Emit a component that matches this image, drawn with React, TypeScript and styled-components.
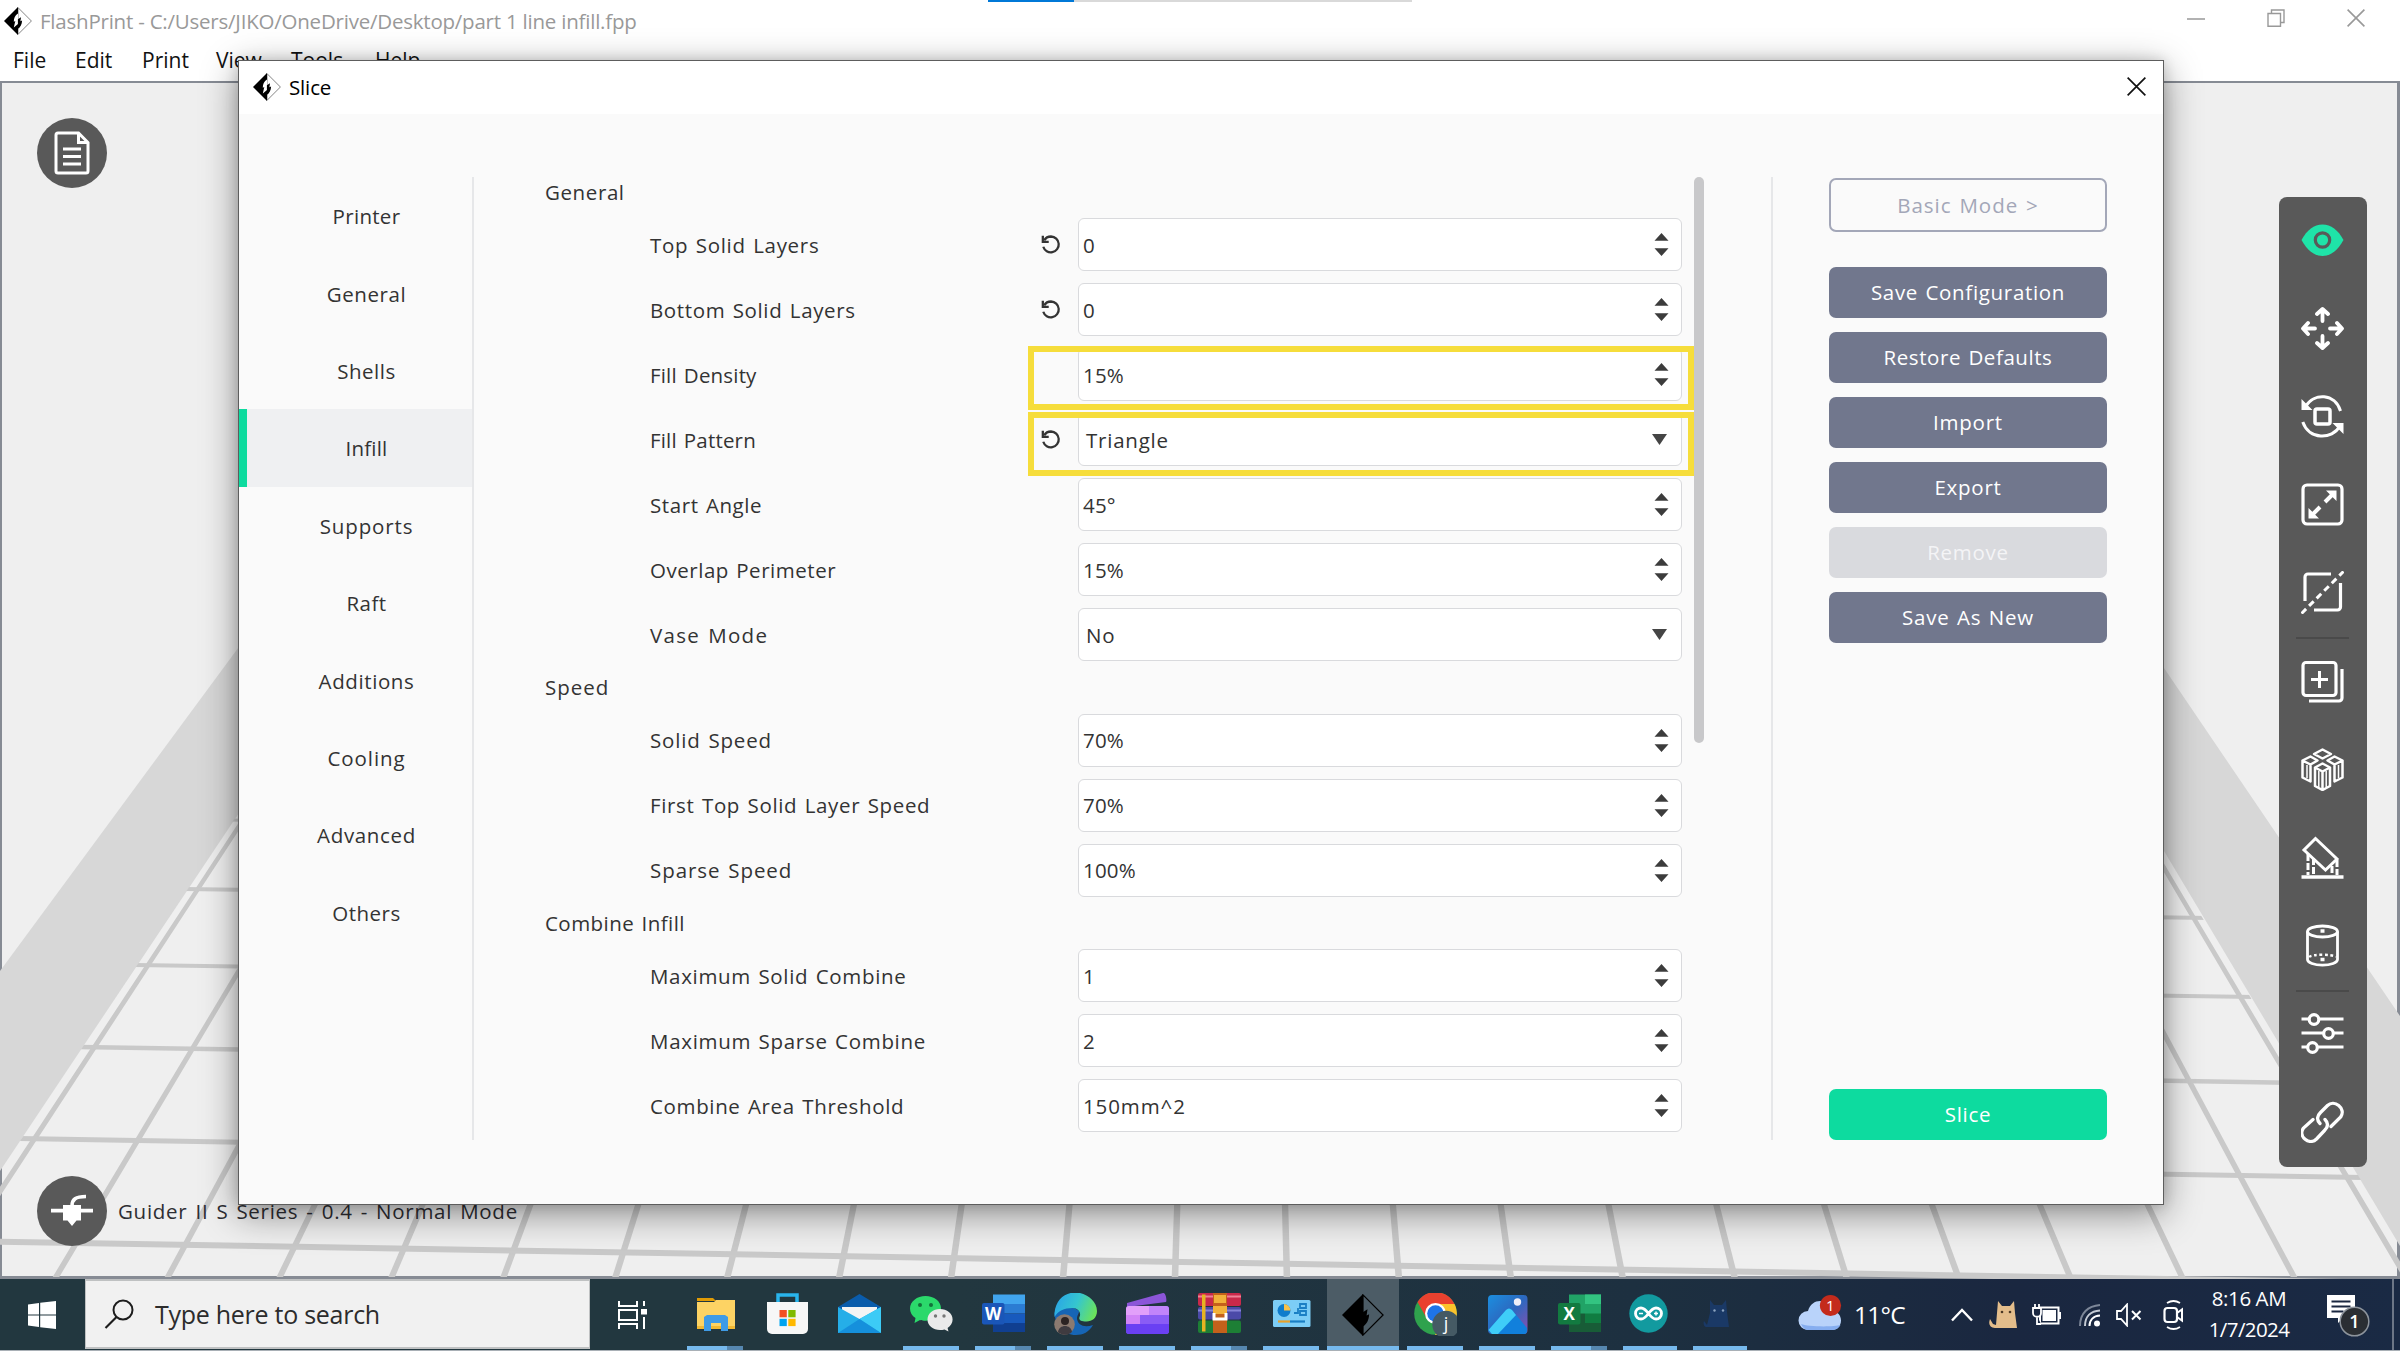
import React from "react";
import styled, { createGlobalStyle, css } from "styled-components";

const GlobalStyle = createGlobalStyle`
  * { box-sizing: border-box; }
  html, body { margin: 0; padding: 0; }
  body { width: 2400px; height: 1351px; overflow: hidden; background: #fff; font-family: "Open Sans", "Noto Sans", sans-serif; }
  button { font: inherit; }
  svg { display: block; flex: none; }
`;

/* ---------- main window ---------- */

const Desktop = styled.div`
  position: relative;
  width: 2400px;
  height: 1351px;
  display: flex;
  flex-direction: column;
  overflow: hidden;
  background: #fff;
`;

const TitleBar = styled.header`
  height: 42px;
  display: flex;
  align-items: center;
  padding: 0 35px 0 4px;
  gap: 8px;
  flex: none;
`;

const WindowTitle = styled.span`
  font-size: 20.5px;
  line-height: 28px;
  color: #999;
  letter-spacing: -0.22px;
  white-space: pre;
  flex: 1;
`;

const WindowControls = styled.div`
  display: flex;
  align-items: center;
  gap: 62px;
  padding-bottom: 7px;
`;

const TabHint = styled.div`
  position: absolute;
  top: 0;
  left: 988px;
  width: 424px;
  height: 2px;
  display: flex;
  background: #d9d9d9;
  &::before { content: ""; width: 86px; background: #0078d7; }
`;

const MenuBar = styled.nav`
  height: 39px;
  flex: none;
  display: flex;
  padding-left: 13px;
`;

const MenuItem = styled.span<{ $w: number }>`
  width: ${(p) => p.$w}px;
  font-size: 21px;
  line-height: 37px;
  letter-spacing: 0;
  color: #111;
`;

const Viewport = styled.main`
  position: relative;
  flex: 1;
  border: 2px solid #868b94;
  border-width: 2px 3px 3px 2px;
  background: #efefef;
  display: flex;
  flex-direction: column;
  justify-content: space-between;
  align-items: flex-start;
  padding: 35px 0 30px 35px;
`;

const Scene = styled.svg`
  position: absolute;
  left: -2px;
  top: -2px;
`;

const RoundButton = styled.button`
  position: relative;
  width: 70px;
  height: 70px;
  border: 0;
  border-radius: 50%;
  background: #595959;
  display: grid;
  place-items: center;
  padding: 0;
`;

const StatusRow = styled.div`
  position: relative;
  display: flex;
  align-items: center;
  gap: 11px;
`;

const StatusText = styled.span`
  font-size: 20.5px;
  line-height: 28px;
  letter-spacing: 0.72px;
  word-spacing: 2px;
  color: #2e2e33;
  white-space: pre;
`;

const Toolbar = styled.aside`
  position: absolute;
  z-index: 1;
  left: 2277px;
  top: 114px;
  width: 88px;
  height: 970px;
  border-radius: 8px;
  background: #595959;
  display: flex;
  flex-direction: column;
`;

const ToolSlot = styled.div<{ $line?: boolean }>`
  flex: 1;
  display: grid;
  place-items: center;
  padding: 0 2px 2px 0;
  position: relative;
  ${(p) =>
    p.$line &&
    css`
      &::after {
        content: "";
        position: absolute;
        left: 17px;
        right: 18px;
        bottom: -1px;
        height: 2px;
        background: #4a4a4a;
      }
    `}
`;

/* ---------- slice dialog ---------- */

const Dialog = styled.section`
  position: absolute;
  left: 238px;
  top: 60px;
  width: 1926px;
  height: 1145px;
  border: 1.5px solid #5d5d5d;
  background: #fafafa;
  box-shadow: 0 9px 34px rgba(0, 0, 0, 0.42), 0 0 12px rgba(0, 0, 0, 0.14);
  display: flex;
  flex-direction: column;
`;

const DialogHeader = styled.header`
  height: 53px;
  flex: none;
  display: flex;
  align-items: center;
  background: #fff;
  padding: 0 17px 2px 14px;
  gap: 8px;
`;

const DialogTitle = styled.h1`
  margin: 0;
  flex: 1;
  font-weight: 400;
  font-size: 20.5px;
  line-height: 28px;
  letter-spacing: -0.15px;
  color: #000;
`;

const DialogBody = styled.div`
  display: grid;
  grid-template-columns: 235px 1299px 1fr;
  height: 963px;
  margin-top: 63px;
  font-size: 20.5px;
  word-spacing: 1.5px;
`;

const SideNav = styled.nav`
  border-right: 2px solid #e6e7e9;
  display: flex;
  flex-direction: column;
`;

const NavItem = styled.a<{ $on?: boolean; $track: number }>`
  height: 77.4px;
  border-left: 8px solid ${(p) => (p.$on ? "#0ddb9f" : "transparent")};
  background: ${(p) => (p.$on ? "#eff0f2" : "transparent")};
  padding: 1px 0 0 14px;
  display: flex;
  align-items: center;
  justify-content: center;
  letter-spacing: ${(p) => p.$track}px;
  color: #333;
`;

const Settings = styled.div`
  display: flex;
  justify-content: space-between;
  padding-left: 71px;
  border-right: 2px solid #e6e7e9;
`;

const Form = styled.div`
  width: 1149px;
  overflow: hidden;
`;

const Group = styled.section`
  display: flex;
  flex-direction: column;
  gap: 12px;
`;

const GroupTitle = styled.h2<{ $first?: boolean; $track: number }>`
  margin: 0 0 -12px;
  height: ${(p) => (p.$first ? 41.3 : 52.5)}px;
  line-height: ${(p) => (p.$first ? 30 : 53)}px;
  font-weight: 400;
  font-size: 20.5px;
  letter-spacing: ${(p) => p.$track}px;
  color: #333;
`;

const Row = styled.div`
  position: relative;
  height: 53px;
  display: grid;
  grid-template-columns: 391px 37px 604px;
  align-items: center;
  padding-left: 105px;
`;

const RowLabel = styled.label<{ $track: number }>`
  line-height: 28px;
  letter-spacing: ${(p) => p.$track}px;
  color: #333;
`;

const Field = styled.div<{ $select?: boolean; $track: number }>`
  height: 53px;
  border: 1.5px solid #d9dadd;
  border-radius: 6px;
  background: #fff;
  display: flex;
  align-items: center;
  justify-content: space-between;
  padding: 0 ${(p) => (p.$select ? "14px 0 7px" : "12px 0 4px")};
  color: #333;
  letter-spacing: ${(p) => p.$track}px;
`;

const Highlight = styled.div<{ $dy: number }>`
  position: absolute;
  left: 483px;
  top: ${(p) => p.$dy}px;
  width: 666px;
  height: 64px;
  border: 6px solid #f6dd3b;
`;

const Scrollbar = styled.div`
  width: 10px;
  height: 566px;
  border-radius: 5px;
  background: #c8c8ca;
  margin-right: 67px;
`;

const Actions = styled.div`
  display: flex;
  flex-direction: column;
  gap: 14px;
  padding: 1px 56px 0 56px;
`;

const ActionButton = styled.button<{ $kind?: "outline" | "disabled" | "primary"; $track?: number }>`
  height: 51px;
  border: 0;
  border-radius: 7px;
  padding: 0 0 1px;
  letter-spacing: ${(p) => p.$track ?? 0.75}px;
  word-spacing: 1.5px;
  color: #fff;
  background: #71778d;
  ${(p) =>
    p.$kind === "outline" &&
    css`
      height: 54px;
      margin-bottom: 21px;
      border: 2px solid #a3a7b8;
      background: #fafafa;
      color: #a3a7b8;
    `}
  ${(p) => p.$kind === "disabled" && css`background: #d9dade; color: #f4f4f6;`}
  ${(p) => p.$kind === "primary" && css`background: #0ddb9f; margin-top: auto;`}
`;

/* ---------- taskbar ---------- */

const Taskbar = styled.footer`
  position: relative;
  height: 72px;
  flex: none;
  display: flex;
  background: linear-gradient(90deg, #22373f 0%, #22373f 40%, #1d3040 68%, #1a2740 84%, #1a2a44 100%);
  border-bottom: 1px solid #a9b0b6;
`;

const StartButton = styled.div`
  width: 85px;
  padding-right: 2px;
  display: grid;
  place-items: center;
`;

const SearchBox = styled.div`
  width: 505px;
  height: 70px;
  border: 2px solid #bfc1c2;
  border-width: 2px 1px;
  background: #f1f1f1;
  display: flex;
  align-items: center;
  padding-left: 18px;
  gap: 21px;
  font-size: 25px;
  letter-spacing: -0.27px;
  color: #2c2c2c;
`;

const TaskView = styled.div`
  width: 89px;
  padding-left: 28px;
  display: flex;
  align-items: center;
`;

const Apps = styled.div`
  display: flex;
`;

const AppSlot = styled.div<{ $active?: boolean }>`
  position: relative;
  width: 72px;
  height: 71px;
  display: grid;
  place-items: center;
  background: ${(p) => (p.$active ? "#4c5c66" : "transparent")};
  &:nth-last-child(-n + 2) { width: 70px; }
`;

const RunLine = styled.i<{ $more?: boolean; $wide?: boolean }>`
  position: absolute;
  bottom: 0;
  left: ${(p) => (p.$wide ? 0 : 8)}px;
  right: ${(p) => (p.$wide ? 0 : 8)}px;
  height: 4px;
  background: ${(p) => (p.$more ? "linear-gradient(90deg, #76b9ed 72%, #5687b0 72%)" : "#76b9ed")};
`;

const Tray = styled.div`
  flex: 1;
  display: flex;
  align-items: center;
  color: #fff;
`;

const TrayItem = styled.div<{ $w: number }>`
  width: ${(p) => p.$w}px;
  display: flex;
  align-items: center;
`;

const Temperature = styled.span`
  font-size: 24.5px;
  letter-spacing: -0.75px;
`;

const Clock = styled.div`
  width: 116px;
  padding-bottom: 2px;
  display: flex;
  flex-direction: column;
  font-size: 20.5px;
  line-height: 31px;
`;

const ClockLine = styled.span<{ $track: number }>`
  width: 78px;
  display: flex;
  justify-content: center;
  white-space: pre;
  letter-spacing: ${(p) => p.$track}px;
`;

const ShowDesktop = styled.div`
  margin-left: auto;
  width: 8px;
  height: 71px;
  border-left: 2px solid #6d7787;
`;

/* ---------- drawings ---------- */

const Logo = ({ size, solid }: { size: number; solid?: boolean }) => (
  <svg width={size} height={size} viewBox="0 0 28 28">
    <path d="M14 0.6 27.4 14 14 27.4z" fill={solid ? "none" : "#fff"} stroke={solid ? "#000" : "#666"} strokeWidth="0.8" />
    <path d="M14 0v28L0 14z" fill="#000" />
    <path d="M14 6.500C11 8.500 9.800 11 9.800 14.800l1.500-.9-1.500 6.600L14 17z" fill={solid ? "#4c5c66" : "#fff"} opacity={solid ? 0 : 1} />
    <path d="M13.900 12.200l3.100-2-.6 4.100 1.700-.8c-.2 4.200-1.700 6.700-4.200 8.200z" fill="#000" />
  </svg>
);

const Cross = ({ color, size = 18 }: { color: string; size?: number }) => (
  <svg width={size} height={size} viewBox="0 0 18 18" stroke={color} strokeWidth="1.6" fill="none">
    <path d="M.6.6l16.800 16.800M17.400.6.6 17.400" />
  </svg>
);

const ResetIcon = () => (
  <svg width="20" height="21" viewBox="0 0 22 22" fill="none" stroke="#333" strokeWidth="2.500">
    <path d="M3.500 6.500C5.200 3.500 8 2.200 11 2.200a8.700 8.700 0 1 1-8.500 11.300" />
    <path d="M2 1.500v6.700h6.500" />
  </svg>
);

const Stepper = () => (
  <svg width="15" height="23" viewBox="0 0 15 23" fill="#3c3c3c">
    <path d="M7.500 0 14.500 7.800H.5zM7.500 23 .5 15.200h14z" />
  </svg>
);

const Arrow = () => (
  <svg width="15" height="11" viewBox="0 0 15 11" fill="#454545">
    <path d="M0 0h15L7.500 11z" />
  </svg>
);

const VX = 1237;
const VY = -700;
const FLOOR_Y = 1277;
const floorColumns = Array.from({ length: 23 }, (_, i) => {
  const x = 1175 + (i - 11) * 111.9;
  const t = 0.3;
  const topX = x + (VX - x) * t;
  const topY = FLOOR_Y + (VY - FLOOR_Y) * t;
  const half = 3.3;
  return `M${x - half} ${FLOOR_Y}L${topX - half * (1 - t)} ${topY}H${topX + half * (1 - t)}L${x + half} ${FLOOR_Y}z`;
});
const floorRows: [number, number, number, number, number][] = [
  [229, 820, 2164, 848, 3],
  [184, 889, 2209, 918, 4],
  [135, 965, 2255, 997, 4],
  [79, 1047, 2303, 1083, 4.5],
  [19, 1138.500, 2363, 1177.500, 5],
  [-10, 1241.500, 2400, 1283, 6],
];

const PrintBed = () => (
  <Scene width="2400" height="1198" viewBox="0 81 2400 1198">
    <defs>
      <clipPath id="bed">
        <path d="M0 1171 245 803H2133L2400 1244.500V1279H0z" />
      </clipPath>
    </defs>
    <path d="M0 971 325 530V684L0 1171z" fill="#d7d7d7" />
    <path d="M2100 600 2164 668 2400 1016V1246L2164 851 2100 750z" fill="#d7d7d7" />
    <g clipPath="url(#bed)">
      <path d={floorColumns.join("")} fill="#c9c9c9" />
      {floorRows.map(([x1, y1, x2, y2, w]) => (
        <line key={y1} x1={x1} y1={y1} x2={x2} y2={y2} stroke="#c9c9c9" strokeWidth={w} />
      ))}
    </g>
  </Scene>
);

const DocIcon = () => (
  <svg width="36" height="44" viewBox="0 0 36 44" fill="none" stroke="#fff" strokeWidth="3">
    <path d="M4 2h20.500L34 11.500V40a2 2 0 0 1-2 2H4a2 2 0 0 1-2-2V4a2 2 0 0 1 2-2z" />
    <path d="M24.500 2v9.500H34" />
    <path d="M9 18h18M9 25.500h18M9 33h18" strokeWidth="3.200" />
  </svg>
);

const NozzleIcon = () => (
  <svg width="44" height="34" viewBox="0 0 44 34" fill="#fff">
    <path d="M13 11h18v15.500h-4.500L22 32l-4.500-5.500H13z" />
    <path d="M1 14.700h42v3.700H1z" />
    <path d="M22 12c0-6.500 3.500-9.500 14-9.500" fill="none" stroke="#fff" strokeWidth="3.600" />
  </svg>
);

const toolIcons: { line?: boolean; art: React.ReactNode }[] = [
  {
    art: (
      <>
        <path d="M.5 21C6 11 13 5.500 21.500 5.500S37 11 42.500 21C37 31 30 37 21.500 37S6 31 .5 21z" fill="#1fe3a8" stroke="none" />
        <circle cx="21.500" cy="21" r="7.200" stroke="#595959" strokeWidth="3.200" fill="#1fe3a8" />
      </>
    ),
  },
  {
    art: (
      <g strokeWidth="3.800" strokeLinecap="round" strokeLinejoin="round">
        <path d="M21.500 14V2.500M16 7l5.500-5 5.500 5M21.500 29v11.500M16 36l5.500 5 5.500-5M14 21.500H2.500M7 16l-5 5.500 5 5.500M29 21.500h11.500M36 16l5 5.500-5 5.500" />
      </g>
    ),
  },
  {
    art: (
      <>
        <rect x="14" y="14" width="15" height="15" rx="2" strokeWidth="3.500" />
        <path d="M4.500 11.500C13-2.500 34-2 39.500 16M1.800 27C8 45 31 45 39 31" strokeWidth="3" />
        <path d="M.5 4v11h11zM42.500 39V28h-11z" fill="#fff" stroke="none" />
      </>
    ),
  },
  {
    art: (
      <>
        <rect x="2" y="2" width="39" height="39" rx="4" strokeWidth="3.200" />
        <path d="M24 19l9-9M19 24l-9 9" strokeWidth="4" />
        <path d="M25 7.500h10.500V18zM7.500 25v10.500H18z" fill="#fff" stroke="none" />
      </>
    ),
  },
  {
    line: true,
    art: (
      <>
        <path d="M4 30V6a3 3 0 0 1 3-3h23M39.500 12v24a3 3 0 0 1-3 3H13" strokeWidth="3.200" />
        <path d="M.5 42.500l42-42" strokeWidth="3" strokeDasharray="6.500 4.200" />
      </>
    ),
  },
  {
    art: (
      <>
        <rect x="2" y="2.500" width="33" height="33" rx="3" strokeWidth="3.200" />
        <path d="M18.500 11v17M10 19.500h17" strokeWidth="3" />
        <path d="M41 9v29a3 3 0 0 1-3 3H8" strokeWidth="3.200" />
      </>
    ),
  },
  {
    art: (
      <g strokeWidth="2.500" strokeLinejoin="round">
        <path d="M21.500 1.500 30 6l-8.500 4.500L13 6z" />
        <path d="M9.500 8.500l7 4-7 4-8-4zM1.500 12.500v17l8 4v-17M9.500 33.500v-17" />
        <path d="M33.500 8.500l-7 4 7 4 8-4zM41.500 12.500v17l-8 4v-17" />
        <path d="M21.500 15.500l7.500 4-7.500 4-7.500-4zM14 19.500V38l7.500 4 7.500-4V19.500M21.500 23.500V42" fill="#595959" />
        <path d="M6 17v13M37.500 17v13M17.800 23v16M25.200 23v16" strokeWidth="1.500" />
      </g>
    ),
  },
  {
    art: (
      <>
        <path d="M14.500 2.500 3 14l21.500 20L36 23z" strokeWidth="3" />
        <path d="M7 18v21M12.500 22v17M31 30v9M36 24v15" strokeWidth="3" strokeDasharray="7 2" />
        <path d="M.5 41h42" strokeWidth="3.400" />
      </>
    ),
  },
  {
    art: (
      <>
        <ellipse cx="21.500" cy="7.500" rx="15" ry="5.500" strokeWidth="2.800" />
        <path d="M6.500 7.500v28c0 3 6.700 5.700 15 5.700s15-2.700 15-5.700v-28" strokeWidth="2.800" />
        <path d="M8 33c3-3 24-3 27 0" strokeWidth="2.400" strokeDasharray="2.800 2.600" />
        <path d="M19.500 7h4M19.500 35.500h4" strokeWidth="3.500" />
      </>
    ),
  },
  {
    art: (
      <g strokeWidth="3.200">
        <path d="M.5 7H8M18 7h24.500M.5 21H22M33 21h9.500M.5 35H6M17 35h25.500" />
        <circle cx="13" cy="7.500" r="4.800" />
        <circle cx="27.500" cy="21.500" r="4.800" />
        <circle cx="11.500" cy="35.500" r="4.800" />
      </g>
    ),
  },
  {
    art: (
      <g strokeWidth="3.300" strokeLinecap="round" transform="translate(0 1)">
        <path d="M19 22.500c-4-4-2.500-8 .5-11l7-7c6.500-6.500 19 2.500 13.200 11.500L30 25.500" />
        <path d="M24 18.500c4 4 2.500 8-.5 11l-8 8.500C8.500 45-3.500 35.500 2.500 27L12 18.500" />
      </g>
    ),
  },
];

interface Setting {
  label: string;
  value: string;
  select?: boolean;
  reset?: boolean;
  mark?: number;
  track?: number;
  valueTrack?: number;
}

const groups: { title: string; track: number; rows: Setting[] }[] = [
  {
    title: "General",
    track: 0.6,
    rows: [
      { label: "Top Solid Layers", value: "0", reset: true, track: 0.69 },
      { label: "Bottom Solid Layers", value: "0", reset: true, track: 0.63 },
      { label: "Fill Density", value: "15%", mark: -2, track: 0.18 },
      { label: "Fill Pattern", value: "Triangle", select: true, reset: true, mark: -1, track: 0.18 },
      { label: "Start Angle", value: "45°", track: 0.58 },
      { label: "Overlap Perimeter", value: "15%", track: 0.53 },
      { label: "Vase Mode", value: "No", select: true, track: 1.3 },
    ],
  },
  {
    title: "Speed",
    track: 1,
    rows: [
      { label: "Solid Speed", value: "70%", track: 0.85 },
      { label: "First Top Solid Layer Speed", value: "70%", track: 0.65 },
      { label: "Sparse Speed", value: "100%", track: 0.94 },
    ],
  },
  {
    title: "Combine Infill",
    track: 0.46,
    rows: [
      { label: "Maximum Solid Combine", value: "1", track: 0.67 },
      { label: "Maximum Sparse Combine", value: "2", track: 0.69 },
      { label: "Combine Area Threshold", value: "150mm^2", track: 0.64, valueTrack: 0.9 },
    ],
  },
];

const navItems: [string, number][] = [
  ["Printer", 0.3],
  ["General", 0.6],
  ["Shells", 0.5],
  ["Infill", 0.2],
  ["Supports", 0.87],
  ["Raft", 0.5],
  ["Additions", 0.6],
  ["Cooling", 0.9],
  ["Advanced", 0.65],
  ["Others", 0.5],
];

const glyph = (x: number, y: number, size: number, text: string, weight = 700, fill = "#fff") => (
  <text x={x} y={y} fontSize={size} fontWeight={weight} fill={fill} textAnchor="middle" fontFamily="Open Sans, sans-serif">
    {text}
  </text>
);

interface AppEntry {
  name: string;
  line?: "one" | "more" | "wide";
  art: React.ReactNode;
}

const apps: AppEntry[] = [
  {
    name: "explorer",
    line: "more",
    art: (
      <>
        <path d="M3 5h16l3 3H3z" fill="#e09b05" />
        <path d="M3 9h17l2-2h19v29H3z" fill="#fdd364" />
        <path d="M3 33h38v3H3z" fill="#f2b933" />
        <path d="M10 38V24l3-2h18l3 2v14h-7v-8h-10v8z" fill="#3f9be6" />
      </>
    ),
  },
  {
    name: "store",
    art: (
      <>
        <path d="M12 10V2h19v8" fill="none" stroke="#29b4ec" strokeWidth="3.500" />
        <path d="M1 9h41v27a5 5 0 0 1-5 5H6a5 5 0 0 1-5-5z" fill="#f7f7f7" />
        <path d="M13.500 17h7.300v7.300h-7.300z" fill="#f25022" />
        <path d="M22.300 17h7.300v7.300h-7.300z" fill="#7fba00" />
        <path d="M13.500 25.800h7.300v7.300h-7.300z" fill="#00a4ef" />
        <path d="M22.300 25.800h7.300v7.300h-7.300z" fill="#ffb900" />
      </>
    ),
  },
  {
    name: "mail",
    art: (
      <>
        <path d="M0 14 21.500 1 43 14v4H0z" fill="#0a5cab" />
        <path d="M4 14h35v12H4z" fill="#f4f4f4" />
        <path d="M0 14v26h43V14L21.500 26z" fill="#25aee8" />
        <path d="M43 14 21.500 26 43 40z" fill="#3ccbf6" />
        <path d="M0 40 21.500 26 43 40z" fill="#1590dc" />
      </>
    ),
  },
  {
    name: "wechat",
    line: "one",
    art: (
      <>
        <path d="M15.500 3C7 3 0 8.500 0 15.500c0 4 2 7.300 5.500 9.500L4.500 30l5.500-3c2 .6 3.500.8 5.500.8 8.500 0 15.500-5.500 15.500-12.500S24 3 15.500 3z" fill="#2bd96b" />
        <path d="M30 16c-7 0-12.500 4.500-12.500 10.500S23 37 30 37c1.600 0 3-.2 4.500-.6l4 2.200-.9-3.700c3-2 5-5 5-8.400C42.600 20.500 37 16 30 16z" fill="#eaeaea" />
        <g fill="#14713a"><circle cx="10" cy="12" r="2" /><circle cx="21" cy="12" r="2" /></g>
        <g fill="#777"><circle cx="25.500" cy="23" r="1.700" /><circle cx="34" cy="23" r="1.700" /></g>
      </>
    ),
  },
  {
    name: "word",
    line: "more",
    art: (
      <>
        <path d="M11 1.500h32V11H11z" fill="#41a5ee" />
        <path d="M11 11h32v9.500H11z" fill="#2b7cd3" />
        <path d="M11 20.500h32V30H11z" fill="#185abd" />
        <path d="M11 30h32v9H11z" fill="#103f91" />
        <rect y="10" width="22.500" height="21.500" rx="2" fill="#1a56b8" />
        {glyph(11.200, 27, 17, "W")}
      </>
    ),
  },
  {
    name: "edge",
    line: "one",
    art: (
      <>
        <defs>
          <linearGradient id="edgeTop" x1="0" y1=".3" x2="1" y2=".6">
            <stop offset="0" stopColor="#2aa5e6" />
            <stop offset=".5" stopColor="#35c6cf" />
            <stop offset="1" stopColor="#6be35a" />
          </linearGradient>
        </defs>
        <path d="M.5 20C1 32 9 42 22 42c7 0 13-3 17-10-9 3-15 0-16-6 0-4 2-5 2-8-6-6-22-4-24.500 2z" fill="#1665b5" />
        <path d="M.5 20C2 6 11-.5 21.500-.5S43 8 43 18c0 7-5 10.500-10.500 10.500-6 0-8-2-7-4.500 2-4-1-9-7-9C10 15 4 18 .5 24z" fill="url(#edgeTop)" />
        <circle cx="10.500" cy="31.500" r="10.300" fill="#8b7a70" />
        <circle cx="11" cy="28" r="4" fill="#2c2322" />
        <path d="M4 39c1-8 13-8 14 0-4 3.500-10 3.500-14 0z" fill="#3f3b40" />
      </>
    ),
  },
  {
    name: "clipchamp",
    line: "one",
    art: (
      <>
        <path d="M1 10 37 0c3-.6 4 8 3 9L1 14z" fill="#8b55d8" />
        <rect y="13" width="43" height="28" rx="3" fill="#8a5cf5" />
        <path d="M3 13h20v9H0v-6a3 3 0 0 1 3-3z" fill="#e2a0fa" />
        <path d="M23 13h17a3 3 0 0 1 3 3v6H23z" fill="#c184fa" />
        <path d="M0 22h14v9H0z" fill="#d184f7" />
        <path d="M0 31h43v7a3 3 0 0 1-3 3H3a3 3 0 0 1-3-3z" fill="#6a40f3" />
      </>
    ),
  },
  {
    name: "winrar",
    line: "more",
    art: (
      <>
        <rect y="0" width="43" height="13" rx="2" fill="#c9294a" />
        <rect y="14" width="43" height="12.500" rx="2" fill="#4b4aa8" />
        <rect y="27.500" width="43" height="12.500" rx="2" fill="#1d7f35" />
        <path d="M0 2.500h43v2H0z" fill="#ee8397" />
        <path d="M0 16.500h43v2H0z" fill="#8583d5" />
        <path d="M4 1.500h3.500v37H4z" fill="#e6b422" />
        <path d="M15 0h14v40H15z" fill="#c4611b" />
        <path d="M16 2h12v8H16zM15 13h14v8H15z" fill="#f2b13a" />
        <path d="M16 20v6h12v-6" fill="none" stroke="#fff" strokeWidth="3" />
      </>
    ),
  },
  {
    name: "panel",
    line: "one",
    art: (
      <>
        <rect x="3" y="7" width="37.500" height="27" rx="1.500" fill="#7ccdf6" />
        <circle cx="14" cy="17.500" r="6.500" fill="#0f7ccc" />
        <path d="M14 17.500V11a6.500 6.500 0 0 1 6.500 6.500z" fill="#f9c24a" />
        <path d="M24 20h4v-5M30 11h6v4h-6zM30 18h6v4h-6z" fill="none" stroke="#1a7fc4" strokeWidth="1.800" />
        <path d="M8 28.500h12" stroke="#e7a22b" strokeWidth="2.200" />
        <path d="M20 28.500h15" stroke="#1a7fc4" strokeWidth="2.200" />
      </>
    ),
  },
  { name: "flashprint", line: "wide", art: null },
  {
    name: "chrome",
    line: "one",
    art: (
      <>
        <circle cx="21.500" cy="20.500" r="21.300" fill="#2fa24d" />
        <path d="M3.500 9A21.300 21.300 0 0 1 40.500 11H21.500l-9 14z" fill="#e9412f" />
        <path d="M40.500 11A21.300 21.300 0 0 1 21 42l10-17-9.500-14z" fill="#fbc32c" />
        <circle cx="21.500" cy="20.500" r="10.500" fill="#fff" />
        <circle cx="21.500" cy="20.500" r="8.300" fill="#1e74e8" />
        <circle cx="32" cy="31.500" r="13.700" fill="#455a64" />
        {glyph(32, 37, 18, "j", 400)}
      </>
    ),
  },
  {
    name: "photos",
    line: "one",
    art: (
      <>
        <defs>
          <linearGradient id="ph" x1="0" y1="0" x2="1" y2="1">
            <stop offset="0" stopColor="#1b8fe0" />
            <stop offset=".5" stopColor="#2c68bf" />
            <stop offset="1" stopColor="#8a4fb0" />
          </linearGradient>
        </defs>
        <rect x="2" y="2" width="39.500" height="39" rx="4" fill="url(#ph)" />
        <path d="M2.500 37 20 17c2-2 4-2 6 0l15 18v3a3 3 0 0 1-3 3H6z" fill="#1180dc" />
        <path d="M2.500 37 20 17c2-2 4-2 6 0l4 5L12 41H6z" fill="#3fcdf8" />
        <circle cx="31.500" cy="9" r="3.700" fill="#efeef8" />
      </>
    ),
  },
  {
    name: "excel",
    line: "more",
    art: (
      <>
        <path d="M11 1.500h32V39H11z" fill="#21a366" />
        <path d="M27 1.500h16V11H27z" fill="#33c481" />
        <path d="M11 20.500h16V30H11z" fill="#185c37" />
        <path d="M27 20.500h16V30H27z" fill="#107c41" />
        <path d="M11 30h32v9H11z" fill="#185c37" />
        <rect y="10" width="22.500" height="21.500" rx="2" fill="#127a40" />
        {glyph(11.200, 27, 17, "X")}
      </>
    ),
  },
  {
    name: "arduino",
    line: "one",
    art: (
      <>
        <circle cx="19.500" cy="20.500" r="19.200" fill="#129a9f" />
        <g transform="translate(-1 0)">
          <path d="M20.500 20.500C17.500 16.500 15.500 15 13 15a5.500 5.500 0 0 0 0 11c2.500 0 4.500-1.500 7.500-5.500s5-5.500 7.500-5.500a5.500 5.500 0 0 1 0 11c-2.500 0-4.500-1.500-7.500-5.500z" fill="none" stroke="#fff" strokeWidth="2.800" />
          <path d="M11 20.500h4M26 20.500h4M28 18.500v4" stroke="#fff" strokeWidth="1.500" />
        </g>
      </>
    ),
  },
  {
    name: "cat",
    line: "one",
    art: (
      <>
        <path d="M11 7l4 5h8l4-5 1 12 2 15H7c-2 0-3-4-2-6l3 4 3-12z" fill="#1a3966" />
        <circle cx="15.500" cy="17.500" r="1.200" fill="#8aa2bf" />
        <circle cx="24" cy="17.500" r="1.200" fill="#8aa2bf" />
      </>
    ),
  },
];

const Art = ({ w, h, children, color = "#fff" }: { w: number; h: number; children: React.ReactNode; color?: string }) => (
  <svg width={w} height={h} viewBox={`0 0 ${w} ${h}`} fill="none" stroke={color} strokeWidth="1.800">
    {children}
  </svg>
);

/* ---------- page ---------- */

const SettingRow = ({ row }: { row: Setting }) => (
  <Row>
    <RowLabel $track={row.track ?? 0.65}>{row.label}</RowLabel>
    <span>{row.reset && <ResetIcon />}</span>
    <Field $select={row.select} $track={row.valueTrack ?? (row.select ? 0.78 : 0.2)}>
      <span>{row.value}</span>
      {row.select ? <Arrow /> : <Stepper />}
    </Field>
    {row.mark !== undefined && <Highlight $dy={row.mark} />}
  </Row>
);

const SliceDialog = () => (
  <Dialog>
    <DialogHeader>
      <Logo size={28} />
      <DialogTitle>Slice</DialogTitle>
      <Cross color="#111" size={19} />
    </DialogHeader>
    <DialogBody>
      <SideNav>
        {navItems.map(([name, track]) => (
          <NavItem key={name} $on={name === "Infill"} $track={track}>{name}</NavItem>
        ))}
      </SideNav>
      <Settings>
        <Form>
          {groups.map((g, i) => (
            <Group key={g.title}>
              <GroupTitle $first={i === 0} $track={g.track}>{g.title}</GroupTitle>
              {g.rows.map((r) => (
                <SettingRow key={r.label} row={r} />
              ))}
            </Group>
          ))}
        </Form>
        <Scrollbar />
      </Settings>
      <Actions>
        <ActionButton $kind="outline" $track={1}>Basic Mode &gt;</ActionButton>
        <ActionButton $track={0.68}>Save Configuration</ActionButton>
        <ActionButton $track={0.57}>Restore Defaults</ActionButton>
        <ActionButton>Import</ActionButton>
        <ActionButton>Export</ActionButton>
        <ActionButton $kind="disabled">Remove</ActionButton>
        <ActionButton>Save As New</ActionButton>
        <ActionButton $kind="primary">Slice</ActionButton>
      </Actions>
    </DialogBody>
  </Dialog>
);

const SystemTray = () => (
  <Tray>
    <TrayItem $w={56}>
      <svg width="44" height="42" viewBox="0 0 44 42">
        <path d="M10 36a9.500 9.500 0 0 1 0-19C12 10 17 7 22 7c7 0 11 4 12 10 5 0 9 4 9 9.500S39 36 34 36z" fill="#b9d3fa" />
        <path d="M3 30c2 4 4 6 7 6h24c4 0 7-2 8.500-5-6 2-33 2-39.500-1z" fill="#86aef0" />
        <circle cx="32.500" cy="11.500" r="10.600" fill="#c42b1c" />
        {glyph(32.300, 17, 15, "1", 400)}
      </svg>
    </TrayItem>
    <TrayItem $w={97}><Temperature>11°C</Temperature></TrayItem>
    <TrayItem $w={38}><Art w={22} h={14}><path d="M1 12.500 11 2l10 10.500" strokeWidth="2.400" /></Art></TrayItem>
    <TrayItem $w={43}>
      <Art w={29} h={29}>
        <path d="M9 1l4 5h8l4-5 1 12 2 15H6c-5 0-7-4-5-9l3 5 3 1z" fill="#e3bd8b" stroke="none" />
        <circle cx="13" cy="12" r="1.300" fill="#4a3824" stroke="none" />
        <circle cx="21" cy="12" r="1.300" fill="#4a3824" stroke="none" />
      </Art>
    </TrayItem>
    <TrayItem $w={46}>
      <Art w={30} h={22}>
        <path d="M8 3.500h18.500v16H8zM28 8v7" strokeWidth="2" />
        <path d="M10.500 6h13.500v11H10.500z" fill="#fff" stroke="none" />
        <path d="M1 4h8v5c0 5-8 5-8 0zM3 0v4M7 0v4M5 12v8h4" strokeWidth="1.800" fill="#1a2740" />
      </Art>
    </TrayItem>
    <TrayItem $w={38}>
      <Art w={24} h={24}>
        <g fill="none" strokeWidth="2">
          <path d="M2 23C2 10 10 3 22 2" stroke="#7d8798" />
          <path d="M7 23C7 13 13 8 22 7.500" stroke="#c5cbd4" />
          <path d="M11.500 23c0-6 4-10 10.500-10.500" />
        </g>
        <circle cx="19" cy="20.500" r="3" fill="#fff" stroke="none" />
      </Art>
    </TrayItem>
    <TrayItem $w={47}>
      <Art w={27} h={24}>
        <path d="M1 8h4l6-6.500v21L5 16H1z" />
        <path d="M16 8l8.500 8.500M24.500 8 16 16.500" strokeWidth="2" />
      </Art>
    </TrayItem>
    <TrayItem $w={47}>
      <Art w={21} h={30}>
        <path d="M4 3c4-2.500 9-2.500 13 0M4 27c4 2.500 9 2.500 13 0" />
        <rect x="1.500" y="8" width="12.500" height="14" rx="3" strokeWidth="2.200" />
        <path d="M14 13l5-3.500v11L14 17" strokeWidth="2" />
      </Art>
    </TrayItem>
    <Clock>
      <ClockLine $track={-0.4}>8:16 AM</ClockLine>
      <ClockLine $track={-0.6}>1/7/2024</ClockLine>
    </Clock>
    <Art w={46} h={44}>
      <path d="M1 2h28v23H17l-5 5v-5H1z" fill="#fff" stroke="none" />
      <path d="M5.500 8.500h19M5.500 13.500h19M5.500 18.500h12" stroke="#1a2740" />
      <circle cx="28.500" cy="28.500" r="14.300" fill="#2a2e33" stroke="#8d949c" strokeWidth="1.500" />
      <g stroke="none">{glyph(28.500, 35, 18, "1", 600)}</g>
    </Art>
    <ShowDesktop />
  </Tray>
);

export default function App() {
  return (
    <>
      <GlobalStyle />
      <Desktop>
        <TitleBar>
          <Logo size={28} />
          <WindowTitle>FlashPrint - C:/Users/JIKO/OneDrive/Desktop/part 1 line infill.fpp</WindowTitle>
          <WindowControls>
            <Art w={18} h={18} color="#999"><path d="M0 10h18" strokeWidth="1.500" /></Art>
            <Art w={18} h={18} color="#999"><path d="M1 4.500h12.500V17.300H1zM4.500 4.500V1H17v12.500h-3.500" strokeWidth="1.400" /></Art>
            <Cross color="#999" />
          </WindowControls>
        </TitleBar>
        <TabHint />
        <MenuBar>
          <MenuItem $w={62}>File</MenuItem>
          <MenuItem $w={67}>Edit</MenuItem>
          <MenuItem $w={74}>Print</MenuItem>
          <MenuItem $w={75}>View</MenuItem>
          <MenuItem $w={84}>Tools</MenuItem>
          <MenuItem $w={60}>Help</MenuItem>
        </MenuBar>
        <Viewport>
          <PrintBed />
          <RoundButton><DocIcon /></RoundButton>
          <StatusRow>
            <RoundButton><NozzleIcon /></RoundButton>
            <StatusText>Guider II S Series - 0.4 - Normal Mode</StatusText>
          </StatusRow>
          <Toolbar>
            {toolIcons.map((t, i) => (
              <ToolSlot key={i} $line={t.line || i === 8}>
                <svg width="43" height="43" viewBox="0 0 43 43" fill="none" stroke="#fff">{t.art}</svg>
              </ToolSlot>
            ))}
          </Toolbar>
        </Viewport>
        <Taskbar>
          <StartButton>
            <svg width="28" height="28" viewBox="0 0 28 28" fill="#fff">
              <path d="M0 3.500 11 2v11.500H0zM12.200 1.800 28 0v13.500H12.200zM0 14.600h11V26L0 24.500zM12.200 14.600H28V28l-15.800-1.800z" />
            </svg>
          </StartButton>
          <SearchBox>
            <Art w={30} h={30} color="#1d1d1d">
              <circle cx="19" cy="11" r="9.500" strokeWidth="2" />
              <path d="M12.500 18 1.500 29" strokeWidth="2.200" />
            </Art>
            Type here to search
          </SearchBox>
          <TaskView>
            <Art w={30} h={28}>
              <path d="M1 0v5h18V0M1 28v-5h18v5M1 9h18v10H1zM26 0v5M26 16v12" strokeWidth="2" />
              <path d="M23 8h6v5.500h-6z" fill="#fff" stroke="none" />
            </Art>
          </TaskView>
          <Apps>
            {apps.map((a) => (
              <AppSlot key={a.name} $active={a.line === "wide"}>
                {a.art ? (
                  <svg width="43" height="43" viewBox="0 0 43 43">{a.art}</svg>
                ) : (
                  <Logo size={42} solid />
                )}
                {a.line && <RunLine $more={a.line === "more"} $wide={a.line === "wide"} />}
              </AppSlot>
            ))}
          </Apps>
          <TrayItem $w={43} />
          <SystemTray />
        </Taskbar>
        <SliceDialog />
      </Desktop>
    </>
  );
}
